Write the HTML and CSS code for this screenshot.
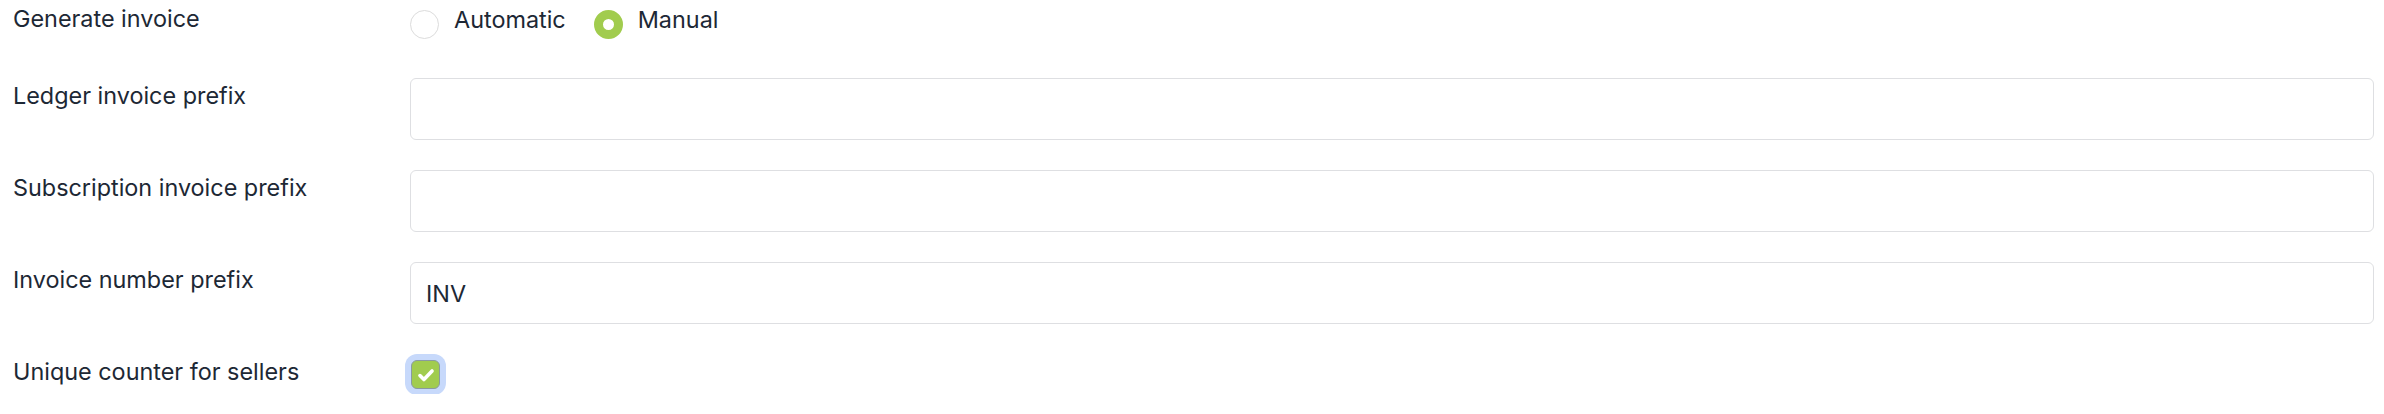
FILE: index.html
```html
<!DOCTYPE html>
<html lang="en">
<head>
<meta charset="utf-8">
<title>Invoice settings</title>
<link rel="stylesheet" href="styles.css">
</head>
<body>
<form class="settings">
  <div class="row row-radio">
    <div class="label">Generate invoice</div>
    <div class="control radios">
      <label class="option">
        <span class="radio"></span>
        <span class="option-text">Automatic</span>
      </label>
      <label class="option">
        <span class="radio radio-on"></span>
        <span class="option-text">Manual</span>
      </label>
    </div>
  </div>
  <div class="row">
    <div class="label">Ledger invoice prefix</div>
    <div class="control"><div class="input"></div></div>
  </div>
  <div class="row">
    <div class="label">Subscription invoice prefix</div>
    <div class="control"><div class="input"></div></div>
  </div>
  <div class="row">
    <div class="label">Invoice number prefix</div>
    <div class="control"><div class="input">INV</div></div>
  </div>
  <div class="row row-check">
    <div class="label">Unique counter for sellers</div>
    <div class="control">
      <span class="checkbox">
        <svg viewBox="0 0 16 16" width="22" height="22" aria-hidden="true"><path d="M3.6 8.4l2.9 2.9 5.9-6.2" fill="none" stroke="#ffffff" stroke-width="2.6" stroke-linecap="round" stroke-linejoin="round"/></svg>
      </span>
    </div>
  </div>
</form>
</body>
</html>
```
FILE: styles.css
```css
html, body {
  margin: 0;
  padding: 0;
  background: #ffffff;
}

body {
  font-family: Inter, "Noto Sans", "Liberation Sans", sans-serif;
  font-size: 23.4px;
  color: #1d2835;
}

.settings {
  display: flex;
  flex-direction: column;
  gap: 30px;
  padding: 0 10px 0 13px;
}

.row {
  display: flex;
  align-items: flex-start;
}

.label {
  flex: 0 0 397px;
  line-height: 36px;
  padding-top: 0;
}

.control {
  flex: 1 1 auto;
  min-width: 0;
}

.row-radio {
  height: 48px;
}

.row-radio .label {
  padding-top: 1px;
}

.radios {
  display: flex;
  align-items: flex-start;
  gap: 28px;
  padding-top: 2px;
}

.option {
  display: flex;
  align-items: flex-start;
  gap: 15px;
}

.option-text {
  line-height: 36px;
}

.radio {
  box-sizing: border-box;
  width: 29px;
  height: 29px;
  margin-top: 8px;
  border-radius: 50%;
  border: 1.5px solid #dcdcdc;
  background: #ffffff;
}

.radio-on {
  border: 9px solid #a1cc4e;
  background: #ffffff;
}

.input {
  box-sizing: border-box;
  height: 62px;
  border: 1.5px solid #dedfe2;
  border-radius: 6px;
  padding: 0 15px;
  display: flex;
  align-items: center;
  background: #ffffff;
}

.row-check {
  height: 40px;
}

.checkbox {
  box-sizing: border-box;
  display: flex;
  align-items: center;
  justify-content: center;
  width: 29px;
  height: 29px;
  margin-top: 6px;
  margin-left: 1px;
  border-radius: 6px;
  border: 1.5px solid #8a9aa0;
  background: #a1cc4e;
  box-shadow: 0 0 0 6px #c7d9fb;
}
```
